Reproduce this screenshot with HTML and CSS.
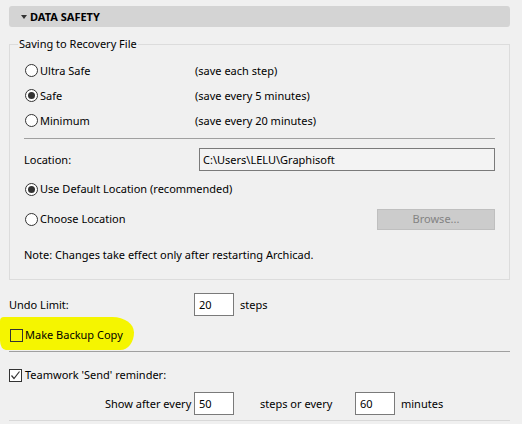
FILE: index.html
```html
<!DOCTYPE html>
<html>
<head>
<meta charset="utf-8">
<link rel="stylesheet" href="styles.css">
</head>
<body>
<div class="panel">
  <div class="header">
    <span class="tri"></span>
    <span class="title">DATA SAFETY</span>
  </div>

  <fieldset class="group">
    <legend class="legend">Saving to Recovery File</legend>
    <div class="opts">
      <div class="row r25">
        <span class="radio"></span><span class="lbl-opt">Ultra Safe</span><span class="desc">(save each step)</span>
      </div>
      <div class="row r25">
        <span class="radio on"></span><span class="lbl-opt">Safe</span><span class="desc">(save every 5 minutes)</span>
      </div>
      <div class="row r25">
        <span class="radio"></span><span class="lbl-opt">Minimum</span><span class="desc">(save every 20 minutes)</span>
      </div>
    </div>
    <div class="sep-inner"></div>
    <div class="row loc-row">
      <span class="loc-lbl">Location:</span>
      <span class="field loc-field">C:\Users\LELU\Graphisoft</span>
    </div>
    <div class="row r30">
      <span class="radio on"></span><span>Use Default Location (recommended)</span>
    </div>
    <div class="row r30 between">
      <span class="row"><span class="radio"></span><span>Choose Location</span></span>
      <span class="btn">Browse...</span>
    </div>
    <div class="note">Note: Changes take effect only after restarting Archicad.</div>
  </fieldset>

  <div class="row undo-row">
    <span class="undo-lbl">Undo Limit:</span>
    <span class="field num">20</span>
    <span class="unit">steps</span>
  </div>

  <div class="row backup-row">
    <span class="hl"></span>
    <span class="check clear"></span>
    <span class="clabel">Make Backup Copy</span>
  </div>

  <div class="sep"></div>

  <div class="row team-row">
    <span class="check">
      <svg width="11" height="11" viewBox="0 0 11 11"><polyline points="1.5,5.5 4,8.5 9.5,1.5" fill="none" stroke="#333" stroke-width="1.2"/></svg>
    </span>
    <span class="clabel2">Teamwork 'Send' reminder:</span>
  </div>

  <div class="row show-row">
    <span class="show-lbl">Show after every</span>
    <span class="field num">50</span>
    <span class="mid">steps or every</span>
    <span class="field num">60</span>
    <span class="unit">minutes</span>
  </div>

  <div class="next-group"></div>
</div>
</body>
</html>
```

FILE: styles.css
```css
* { box-sizing: border-box; }
html, body {
  margin: 0;
  padding: 0;
  background: #f0f0f0;
}
body {
  width: 522px;
  height: 424px;
  overflow: hidden;
  font-family: "Noto Sans", "Open Sans", sans-serif;
  font-size: 11px;
  color: #000;
  line-height: 16px;
  white-space: nowrap;
}
.panel {
  padding: 6px 12px 0 9px;
}
.header {
  height: 21px;
  background: #d4d4d4;
  border-radius: 3px;
  display: flex;
  align-items: center;
  padding-left: 12px;
}
.tri {
  width: 0;
  height: 0;
  border-left: 3px solid transparent;
  border-right: 3px solid transparent;
  border-top: 4px solid #333;
  margin-right: 3px;
}
.title {
  font-weight: bold;
  font-size: 11px;
}
.group {
  margin: 9px 0 0 0;
  border: 1px solid #dcdcdc;
  padding: 0 14px 16px 14px;
  min-width: 0;
}
.legend {
  margin-left: -6px;
  padding: 0 1px;
  line-height: 16px;
}
.row {
  display: flex;
  align-items: center;
}
.opts {
  padding-top: 6px;
}
.r25 { height: 25px; }
.r30 { height: 30px; }
.between { justify-content: space-between; }
.radio {
  width: 13px;
  height: 13px;
  border: 1px solid #333;
  border-radius: 50%;
  background: #fff;
  margin-left: 1px;
  margin-right: 2px;
  display: flex;
  align-items: center;
  justify-content: center;
  flex: none;
}
.radio.on::after {
  content: "";
  width: 7px;
  height: 7px;
  border-radius: 50%;
  background: #333;
}
.lbl-opt {
  width: 155px;
}
.sep-inner {
  margin-top: 5px;
  height: 1px;
  background: #a0a0a0;
}
.loc-row {
  margin-top: 9px;
  height: 23px;
}
.loc-lbl {
  width: 175px;
}
.field {
  height: 23px;
  border: 1px solid #7a7a7a;
  background: #fff;
  display: flex;
  align-items: center;
  padding-left: 3px;
}
.loc-field {
  flex: 1;
  background: #f3f3f3;
}
.loc-row + .r30 { margin-top: 3px; }
.btn {
  width: 118px;
  height: 21px;
  background: #cccccc;
  border: 1px solid #bfbfbf;
  color: #838383;
  display: flex;
  align-items: center;
  justify-content: center;
}
.note {
  margin-top: 13px;
}
.undo-row {
  margin-top: 13px;
  height: 23px;
}
.undo-lbl {
  width: 185px;
}
.num {
  width: 40px;
  padding-left: 4px;
}
.unit {
  margin-left: 6px;
}
.backup-row {
  position: relative;
  margin-top: 9px;
  height: 20px;
  padding-left: 1px;
}
.hl {
  position: absolute;
  left: -9px;
  top: -8px;
  width: 134px;
  height: 33px;
  background: #f5f500;
  border-radius: 4px 22px 14px 6px / 4px 16px 18px 10px;
}
.check {
  position: relative;
  width: 13px;
  height: 13px;
  border: 1px solid #333;
  background: #fff;
  display: flex;
  align-items: center;
  justify-content: center;
  flex: none;
}
.check.clear {
  background: transparent;
}
.clabel {
  position: relative;
  margin-left: 2px;
}
.clabel2 {
  margin-left: 3px;
}
.sep {
  margin-top: 6px;
  height: 1px;
  background: #a0a0a0;
}
.team-row {
  margin-top: 13px;
  height: 20px;
}
.show-row {
  margin-top: 7px;
  height: 23px;
  padding-left: 96px;
}
.show-lbl {
  width: 89px;
}
.mid {
  margin-left: 26px;
  width: 95px;
}
.next-group {
  margin-top: 5px;
  border-top: 1px solid #d8d8d8;
  height: 10px;
}
```
